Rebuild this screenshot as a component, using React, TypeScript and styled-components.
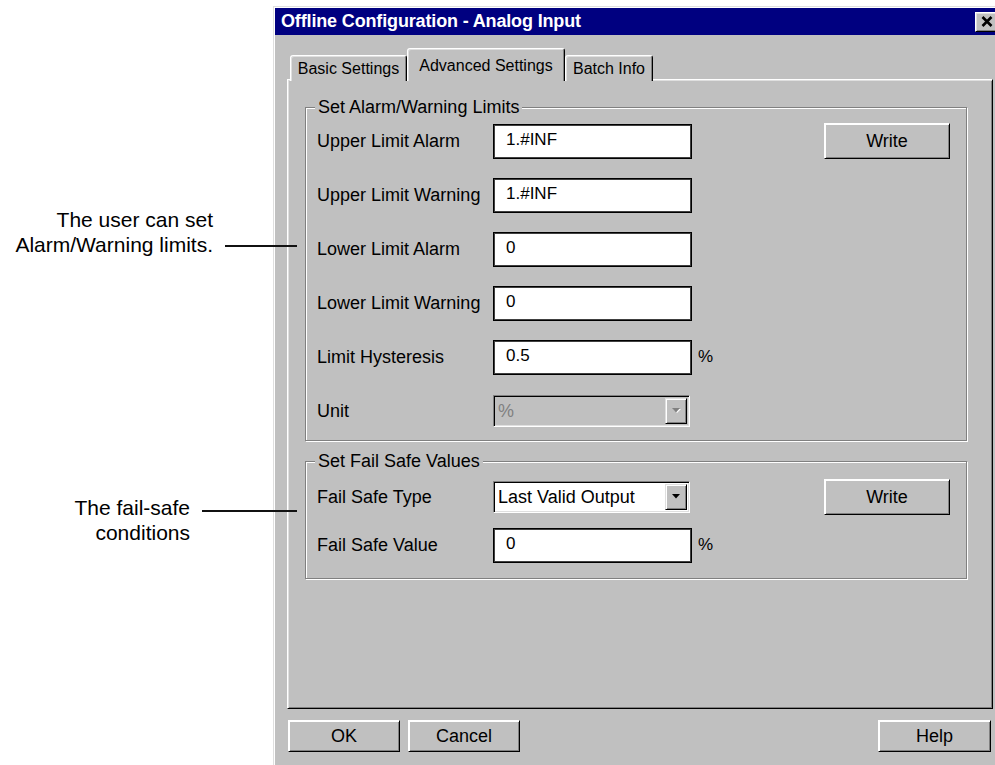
import React from "react";
import styled, { createGlobalStyle } from "styled-components";

const GlobalStyle = createGlobalStyle`
  html, body {
    margin: 0;
    padding: 0;
    background: #ffffff;
    overflow: hidden;
  }
  body {
    font-family: "Liberation Sans", Arial, Helvetica, sans-serif;
    color: #000000;
  }
  *, *::before, *::after {
    box-sizing: border-box;
  }
`;

const Page = styled.div`
  display: flex;
  align-items: flex-start;
  width: 995px;
  height: 765px;
  overflow: hidden;
`;

/* ---------- callouts in the left margin ---------- */

const Notes = styled.aside`
  flex: none;
  width: 273px;
  display: flex;
  flex-direction: column;
  position: relative;
  z-index: 2;
`;

const Note = styled.div<{ $top: number }>`
  display: flex;
  justify-content: flex-end;
  gap: 12px;
  margin-top: ${(p) => p.$top}px;
  margin-right: -24px;
`;

const NoteText = styled.p`
  margin: 0;
  font-size: 21px;
  line-height: 25px;
  text-align: right;
  white-space: nowrap;
  color: #000000;
`;

const Leader = styled.span<{ $length: number; $at: "start" | "end"; $offset: number }>`
  flex: none;
  width: ${(p) => p.$length}px;
  height: 2px;
  background: #111111;
  align-self: ${(p) => (p.$at === "start" ? "flex-start" : "flex-end")};
  margin-top: ${(p) => (p.$at === "start" ? p.$offset : 0)}px;
  margin-bottom: ${(p) => (p.$at === "end" ? p.$offset : 0)}px;
`;

/* ---------- dialog window ---------- */

const Window = styled.section`
  flex: none;
  width: 730px;
  height: 775px;
  margin-top: 6px;
  display: flex;
  flex-direction: column;
  background: #c0c0c0;
  border-top: 1px solid #dfdfdf;
  border-left: 1px solid #dfdfdf;
  padding: 1px 1px 0 1px;
  box-shadow: inset 1px 1px 0 #ffffff;
`;

const TitleBar = styled.header`
  flex: none;
  height: 27px;
  display: flex;
  align-items: center;
  padding: 0 3px 0 6px;
  background: #000080;
`;

const TitleText = styled.h1`
  flex: 1;
  margin: 0;
  font-size: 18px;
  font-weight: bold;
  letter-spacing: -0.15px;
  color: #ffffff;
  white-space: nowrap;
`;

const CloseButton = styled.button`
  flex: none;
  width: 24px;
  height: 20px;
  padding: 0;
  display: flex;
  align-items: center;
  justify-content: center;
  background: #c0c0c0;
  border: 1px solid;
  border-color: #ffffff #000000 #000000 #ffffff;
  box-shadow: inset 1px 1px 0 #dfdfdf, inset -1px -1px 0 #808080;
`;

const Body = styled.div`
  flex: 1;
  display: flex;
  flex-direction: column;
  padding: 13px 9px 0 12px;
`;

const TabStrip = styled.nav`
  flex: none;
  height: 33px;
  margin-bottom: -2px;
  display: flex;
  align-items: flex-end;
  padding-left: 3px;
`;

const Tab = styled.div<{ $active?: boolean; $width: number }>`
  flex: none;
  position: relative;
  z-index: ${(p) => (p.$active ? 1 : 0)};
  width: ${(p) => p.$width}px;
  height: ${(p) => (p.$active ? 33 : 26)}px;
  padding-top: ${(p) => (p.$active ? 8 : 4)}px;
  text-align: center;
  font-size: 16px;
  line-height: 18px;
  white-space: nowrap;
  background: #c0c0c0;
  border: 1px solid;
  border-bottom: none;
  border-color: #ffffff #000000 transparent #ffffff;
  border-radius: 3px 3px 0 0;
  box-shadow: inset 1px 1px 0 #dfdfdf, inset -1px 0 0 #808080;
`;

const Panel = styled.div`
  flex: none;
  height: 630px;
  background: #c0c0c0;
  border: 1px solid;
  border-color: #ffffff #000000 #000000 #ffffff;
  box-shadow: inset 1px 1px 0 #dfdfdf, inset -1px -1px 0 #808080;
  padding: 27px 25px 0 17px;
`;

const Group = styled.fieldset<{ $top: number; $padTop: number; $padBottom: number; $rowGap: number }>`
  position: relative;
  min-width: 0;
  margin: ${(p) => p.$top}px 0 0 0;
  padding: ${(p) => `${p.$padTop}px 16px ${p.$padBottom}px 11px`};
  border: 1px solid #808080;
  box-shadow: inset 1px 1px 0 #ffffff, 1px 1px 0 #ffffff;
  display: grid;
  grid-template-columns: 176px 199px 1fr 126px;
  grid-auto-rows: 36px;
  row-gap: ${(p) => p.$rowGap}px;
  align-items: center;
`;

const GroupCaption = styled.span`
  position: absolute;
  top: -11px;
  left: 9px;
  padding: 0 3px;
  font-size: 18px;
  line-height: 20px;
  background: #c0c0c0;
  white-space: nowrap;
`;

const FieldLabel = styled.label`
  grid-column: 1;
  font-size: 18px;
  white-space: nowrap;
`;

const TextBox = styled.div`
  grid-column: 2;
  width: 199px;
  height: 35px;
  display: flex;
  align-items: center;
  padding: 0 0 3px 12px;
  font-size: 17px;
  background: #ffffff;
  border: 1px solid #000000;
  box-shadow: inset 1px 1px 0 #404040, inset -1px -1px 0 #404040;
`;

const UnitMark = styled.span`
  grid-column: 3;
  padding-left: 6px;
  font-size: 17px;
`;

const SelectBox = styled.div<{ $width: number; $disabled?: boolean }>`
  grid-column: 2;
  width: ${(p) => p.$width}px;
  height: 32px;
  display: flex;
  align-items: stretch;
  background: ${(p) => (p.$disabled ? "#c0c0c0" : "#ffffff")};
  border: 1px solid;
  border-color: #808080 #ffffff #ffffff #808080;
  box-shadow: inset 1px 1px 0 #000000, inset -1px -1px 0 #dfdfdf;
  padding: 2px;
`;

const SelectValue = styled.span<{ $disabled?: boolean }>`
  flex: 1;
  display: flex;
  align-items: center;
  padding-left: 2px;
  font-size: 18px;
  color: ${(p) => (p.$disabled ? "#808080" : "#000000")};
  white-space: nowrap;
`;

const DropButton = styled.span`
  flex: none;
  width: 22px;
  display: flex;
  align-items: center;
  justify-content: center;
  background: #c0c0c0;
  border: 1px solid;
  border-color: #dfdfdf #000000 #000000 #dfdfdf;
  box-shadow: inset 1px 1px 0 #ffffff, inset -1px -1px 0 #808080;
`;

const Button = styled.button<{ $width: number; $height: number }>`
  flex: none;
  width: ${(p) => p.$width}px;
  height: ${(p) => p.$height}px;
  padding: 0;
  font-family: "Liberation Sans", Arial, Helvetica, sans-serif;
  font-size: 18px;
  color: #000000;
  background: #c0c0c0;
  border: 1px solid;
  border-color: #ffffff #000000 #000000 #ffffff;
  box-shadow: inset 1px 1px 0 #ffffff, inset -1px -1px 0 #808080;
`;

const WriteButton = styled(Button)`
  grid-column: 4;
  grid-row: 1;
`;

const Footer = styled.footer`
  flex: none;
  display: flex;
  gap: 8px;
  margin-top: 11px;
  padding: 0 2px 0 1px;
`;

const HelpButton = styled(Button)`
  margin-left: auto;
`;

/* ---------- small glyphs ---------- */

const CloseGlyph = () => (
  <svg width="12" height="11" viewBox="0 0 12 11" aria-hidden="true">
    <path d="M1.5 1 L10.5 10 M10.5 1 L1.5 10" stroke="#000" strokeWidth="2.6" />
  </svg>
);

const DownArrow = ({ disabled }: { disabled?: boolean }) => (
  <svg width="10" height="6" viewBox="0 0 10 6" aria-hidden="true">
    {disabled && <polygon points="2,1 10,1 6,5" fill="#ffffff" />}
    <polygon points="1,0 9,0 5,4.5" fill={disabled ? "#808080" : "#000000"} />
  </svg>
);

type LimitRow = { label: string; value: string; unit?: string };

const limitRows: LimitRow[] = [
  { label: "Upper Limit Alarm", value: "1.#INF" },
  { label: "Upper Limit Warning", value: "1.#INF" },
  { label: "Lower Limit Alarm", value: "0" },
  { label: "Lower Limit Warning", value: "0" },
  { label: "Limit Hysteresis", value: "0.5", unit: "%" },
];

export default function App() {
  return (
    <>
      <GlobalStyle />
      <Page>
        <Notes>
          <Note $top={207}>
            <NoteText>
              The user can set
              <br />
              Alarm/Warning limits.
            </NoteText>
            <Leader $length={72} $at="end" $offset={10} />
          </Note>
          <Note $top={238}>
            <NoteText>
              The fail-safe
              <br />
              conditions
            </NoteText>
            <Leader $length={95} $at="start" $offset={15} />
          </Note>
        </Notes>

        <Window>
          <TitleBar>
            <TitleText>Offline Configuration - Analog Input</TitleText>
            <CloseButton aria-label="Close">
              <CloseGlyph />
            </CloseButton>
          </TitleBar>

          <Body>
            <TabStrip>
              <Tab $width={117}>Basic Settings</Tab>
              <Tab $width={158} $active>
                Advanced Settings
              </Tab>
              <Tab $width={88}>Batch Info</Tab>
            </TabStrip>

            <Panel>
              <Group $top={0} $padTop={15} $padBottom={11} $rowGap={18}>
                <GroupCaption>Set Alarm/Warning Limits</GroupCaption>
                <WriteButton $width={126} $height={36}>
                  Write
                </WriteButton>
                {limitRows.map((row) => (
                  <React.Fragment key={row.label}>
                    <FieldLabel>{row.label}</FieldLabel>
                    <TextBox>{row.value}</TextBox>
                    {row.unit && <UnitMark>{row.unit}</UnitMark>}
                  </React.Fragment>
                ))}
                <FieldLabel>Unit</FieldLabel>
                <SelectBox $width={197} $disabled>
                  <SelectValue $disabled>%</SelectValue>
                  <DropButton>
                    <DownArrow disabled />
                  </DropButton>
                </SelectBox>
              </Group>

              <Group $top={20} $padTop={17} $padBottom={15} $rowGap={12}>
                <GroupCaption>Set Fail Safe Values</GroupCaption>
                <WriteButton $width={126} $height={36}>
                  Write
                </WriteButton>
                <FieldLabel>Fail Safe Type</FieldLabel>
                <SelectBox $width={197}>
                  <SelectValue>Last Valid Output</SelectValue>
                  <DropButton>
                    <DownArrow />
                  </DropButton>
                </SelectBox>
                <FieldLabel>Fail Safe Value</FieldLabel>
                <TextBox>0</TextBox>
                <UnitMark>%</UnitMark>
              </Group>
            </Panel>

            <Footer>
              <Button $width={112} $height={32}>
                OK
              </Button>
              <Button $width={112} $height={32}>
                Cancel
              </Button>
              <HelpButton $width={113} $height={32}>
                Help
              </HelpButton>
            </Footer>
          </Body>
        </Window>
      </Page>
    </>
  );
}
